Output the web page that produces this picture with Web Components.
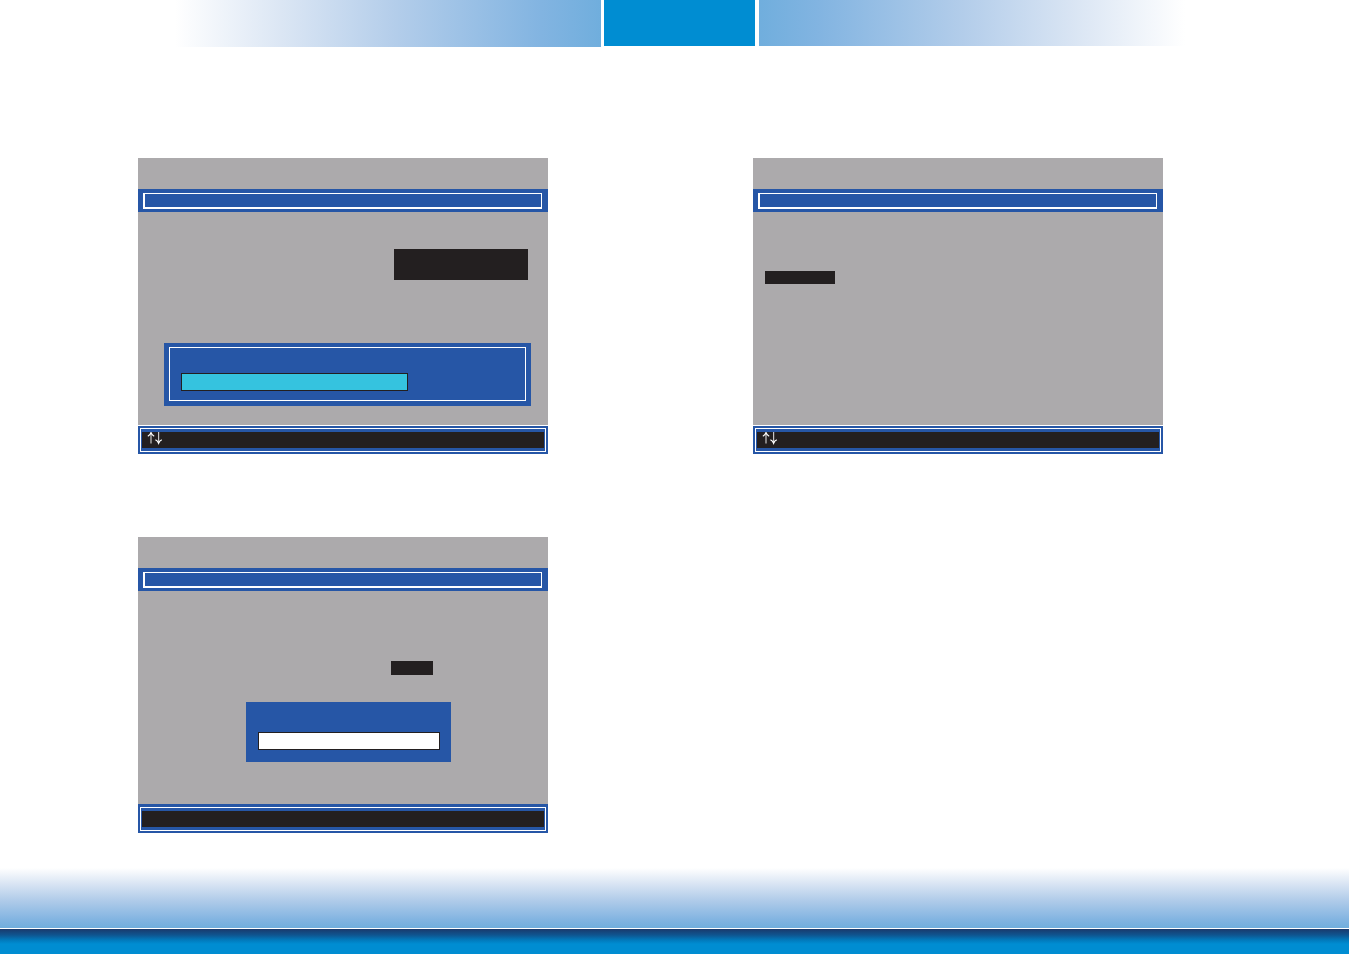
<!DOCTYPE html>
<html lang="en">
  <head>
    <meta charset="UTF-8" />
    <meta name="viewport" content="width=device-width, initial-scale=1.0" />
    <title>BIOS screens</title>
    <style>
      :root {
        --blue: #2656a6;
        --black: #231f20;
        --grey: #acaaac;
        --accent: #008dd2;
      }

      body {
        margin: 0;
        min-height: 100vh;
        display: flex;
        flex-direction: column;
        background: #fff;
        font-family: "Liberation Serif", serif;
      }

      main {
        flex: 1;
        display: grid;
        grid-template-columns: 1fr 1fr;
        align-content: start;
        gap: 83px 205px;
        padding: 111px 187px 0 138px;
      }

      /* where the highlights and dialogs sit on each screen */
      .setup bios-highlight { width: 134px; height: 31px; margin: 37px 20px 0 auto; }
      .setup bios-dialog { margin: 63px 17px 0 26px; }
      .list bios-highlight { width: 70px; height: 13px; margin: 59px 0 0 12px; }
      .prompt bios-highlight { width: 42px; height: 14px; margin: 70px 115px 0 auto; }
      .prompt bios-dialog { width: 205px; margin: 27px 97px 0 auto; }
    </style>
  </head>
  <body>
    <page-banner></page-banner>
    <main>
      <bios-screen class="setup" ruled>
        <bios-highlight></bios-highlight>
        <bios-dialog framed label="Progress"></bios-dialog>
        <arrow-keys slot="keys"></arrow-keys>
      </bios-screen>
      <bios-screen class="list" ruled>
        <bios-highlight></bios-highlight>
        <arrow-keys slot="keys"></arrow-keys>
      </bios-screen>
      <bios-screen class="prompt">
        <bios-highlight></bios-highlight>
        <bios-dialog label="Value"></bios-dialog>
      </bios-screen>
    </main>
    <page-footer></page-footer>

    <script>
      // top band: two fades with a solid tab between them
      class PageBanner extends HTMLElement {
        constructor() {
          super();
          const shadow = this.attachShadow({ mode: 'open' });
          shadow.innerHTML = `
            <style>
              :host {
                display: grid;
                grid-template-columns: 1fr 152px 1fr;
                align-items: start;
                gap: 3px;
                padding: 0 165px 0 175px;
                height: 47px;
              }
              .fade {
                height: 46px;
                background: linear-gradient(to right, #fff, #dbe6f4 25%, #b3cdea 52%, #82b4e1 86%, #70aedd);
              }
              .left { height: 47px; }
              .right {
                background: linear-gradient(to left, #fff, #dbe6f4 25%, #b3cdea 52%, #82b4e1 86%, #70aedd);
              }
              .tab {
                height: 46px;
                background: var(--accent);
                border-right: 1px solid #fff;
              }
            </style>
            <div class="fade left"></div>
            <div class="tab"></div>
            <div class="fade right"></div>
          `;
        }
      }

      class BiosScreen extends HTMLElement {
        constructor() {
          super();
          const shadow = this.attachShadow({ mode: 'open' });
          shadow.innerHTML = `
            <style>
              :host {
                display: flex;
                flex-direction: column;
                min-height: 296px;
                background: var(--grey);
              }
              header {
                margin-top: 31px;
                padding: 4px 6px 3px 5px;
                background: var(--blue);
              }
              .title {
                height: 13px;
                border: solid #fff;
                border-width: 1px 1px 2px 2px;
              }
              .body {
                flex: 1;
                display: flex;
                flex-direction: column;
              }
              footer {
                padding: 3px 2px 2px;
                background: var(--blue);
              }
              :host([ruled]) footer {
                padding-top: 2px;
                border-top: 1px solid #fff;
              }
              .frame {
                padding: 3px 1px;
                border: 1px solid #fff;
              }
              .keys {
                height: 16px;
                padding-left: 5px;
                background: var(--black);
                color: #fff;
              }
            </style>
            <header><div class="title"></div></header>
            <div class="body"><slot></slot></div>
            <footer>
              <div class="frame">
                <div class="keys"><slot name="keys"></slot></div>
              </div>
            </footer>
          `;
        }
      }

      // up and down arrows of the key help line
      class ArrowKeys extends HTMLElement {
        constructor() {
          super();
          const shadow = this.attachShadow({ mode: 'open' });
          shadow.innerHTML = `
            <style>
              :host { display: block; }
              svg { display: block; }
              path {
                fill: none;
                stroke: currentColor;
                stroke-width: 1.2;
              }
              .stem { stroke-opacity: 0.75; }
            </style>
            <svg width="16" height="13" viewBox="0 0 16 13" role="img" aria-label="Up and down">
              <path class="stem" d="M4 0.5V11.5M11.6 0V11" />
              <path d="M0.8 4.2Q3.2 3 4 0.8Q4.8 3 7.2 4.2" />
              <path d="M8.4 7.8Q10.8 9 11.6 11.2Q12.4 9 14.8 7.8" />
            </svg>
          `;
        }
      }

      class BiosHighlight extends HTMLElement {
        constructor() {
          super();
          const shadow = this.attachShadow({ mode: 'open' });
          shadow.innerHTML = `
            <style>
              :host {
                display: block;
                background: var(--black);
              }
            </style>
            <slot></slot>
          `;
        }
      }

      class BiosDialog extends HTMLElement {
        constructor() {
          super();
          const shadow = this.attachShadow({ mode: 'open' });
          shadow.innerHTML = `
            <style>
              :host {
                display: block;
                box-sizing: border-box;
                height: 60px;
                padding: 30px 11px 0 12px;
                background: var(--blue);
              }
              input {
                display: block;
                box-sizing: border-box;
                width: 100%;
                height: 18px;
                margin: 0;
                padding: 0 4px;
                border: 1px solid var(--black);
                border-radius: 0;
                background: #fff;
                font: 12px "Liberation Sans", sans-serif;
                outline: none;
              }
              :host([framed]) {
                height: 63px;
                padding: 4px 5px 5px;
              }
              :host([framed]) .frame {
                box-sizing: border-box;
                height: 54px;
                padding: 25px 117px 0 11px;
                border: 1px solid #fff;
              }
              :host([framed]) input {
                background: #35c3df;
              }
            </style>
            <div class="frame"><input type="text" /></div>
          `;
          shadow.querySelector('input').setAttribute('aria-label', this.getAttribute('label') || 'Value');
        }
      }

      // bottom band: fade, white rule, dark to bright bar
      class PageFooter extends HTMLElement {
        constructor() {
          super();
          const shadow = this.attachShadow({ mode: 'open' });
          shadow.innerHTML = `
            <style>
              :host {
                display: block;
                padding-right: 1px;
              }
              .fade {
                height: 60px;
                background: linear-gradient(#fff, #dbe6f4 25%, #b3cdea 52%, #82b4e1 86%, #70aedd);
              }
              .bar {
                height: 25px;
                border-top: 1px solid #fff;
                background: linear-gradient(#1a3a6c, #0f5590 24%, #0279bb 44%, var(--accent) 60%);
              }
            </style>
            <div class="fade"></div>
            <div class="bar"></div>
          `;
        }
      }

      customElements.define('page-banner', PageBanner);
      customElements.define('bios-screen', BiosScreen);
      customElements.define('arrow-keys', ArrowKeys);
      customElements.define('bios-highlight', BiosHighlight);
      customElements.define('bios-dialog', BiosDialog);
      customElements.define('page-footer', PageFooter);
    </script>
  </body>
</html>
